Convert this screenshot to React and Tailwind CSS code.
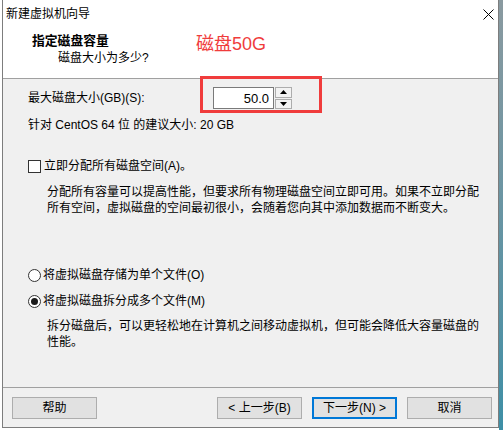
const FONT = { fontFamily: '"Liberation Sans", "Noto Sans CJK SC", sans-serif' }

function CloseIcon() {
  return (
    <svg width="11" height="11" viewBox="0 0 11 11" className="block">
      <path d="M0.5 0.5 L10.5 10.5 M10.5 0.5 L0.5 10.5" stroke="#000" strokeWidth="1" fill="none" />
    </svg>
  )
}

function SpinBox({ value }) {
  return (
    <div className="flex h-[22px] items-stretch">
      <div className="flex w-[61px] items-center justify-end border border-[#7a7a7a] bg-white pr-[4px] text-[13px] leading-none text-black">
        {value}
      </div>
      <div className="ml-[1px] flex w-[17px] flex-col gap-[1px]">
        <button
          type="button"
          className="flex flex-1 items-center justify-center border border-[#adadad] bg-[#f3f3f3]"
        >
          <svg width="7" height="4" viewBox="0 0 7 4">
            <path d="M3.5 0 L7 4 L0 4 Z" fill="#000" />
          </svg>
        </button>
        <button
          type="button"
          className="flex flex-1 items-center justify-center border border-[#adadad] bg-[#f3f3f3]"
        >
          <svg width="7" height="4" viewBox="0 0 7 4">
            <path d="M0 0 L7 0 L3.5 4 Z" fill="#000" />
          </svg>
        </button>
      </div>
    </div>
  )
}

function Radio({ checked, label }) {
  return (
    <div className="flex h-[16px] items-center">
      <span className="flex h-[13px] w-[13px] items-center justify-center rounded-full border border-[#333] bg-white">
        {checked ? <span className="h-[7px] w-[7px] rounded-full bg-[#1a1a1a]" /> : null}
      </span>
      <span className="ml-[2px]">{label}</span>
    </div>
  )
}

function WizardButton({ children, primary, className = '' }) {
  return (
    <button
      type="button"
      className={`flex h-[22px] w-[85px] items-center justify-center bg-[#e1e1e1] text-[12px] leading-none text-black ${
        primary ? 'border-2 border-[#0078d7]' : 'border border-[#adadad]'
      } ${className}`}
    >
      {children}
    </button>
  )
}

export default function App() {
  return (
    <div className="flex h-[430px] w-[503px] bg-white pl-[2px]" style={FONT}>
      <div className="flex h-[428px] w-[497px] flex-col border-x border-b border-[#7d7d7d] bg-[#f0f0f0] text-[12px] leading-[16px] text-black">
        {/* title bar */}
        <div className="flex h-[27px] items-center justify-between bg-white pl-[3px] pr-[4px]">
          <span>新建虚拟机向导</span>
          <span className="mt-[2px]">
            <CloseIcon />
          </span>
        </div>

        {/* header */}
        <div className="relative h-[52px] border-b border-[#a0a0a0] bg-white">
          <div className="pl-[29px] pt-[6px] text-[12.8px] font-bold leading-[16px]">指定磁盘容量</div>
          <div className="pl-[55px] pt-[1px] leading-[16px]">磁盘大小为多少?</div>
          <span className="absolute left-[193px] top-[6px] text-[18px] leading-[22px] text-[#f03c3c]">磁盘50G</span>
        </div>

        {/* body */}
        <div className="relative flex-1 pl-[25px]">
          <div className="mt-[8px] flex h-[22px] items-center">
            <span className="w-[185px]">最大磁盘大小(GB)(S):</span>
            <SpinBox value="50.0" />
          </div>
          <div className="pointer-events-none absolute left-[197px] top-[-3px] h-[37px] w-[122px] border-[3px] border-[#f03c3c]" />

          <div className="mt-[8px] h-[16px]">针对 CentOS 64 位 的建议大小: 20 GB</div>

          <div className="mt-[25px] flex h-[16px] items-center">
            <span className="h-[13px] w-[13px] border border-[#333] bg-white" />
            <span className="ml-[3px]">立即分配所有磁盘空间(A)。</span>
          </div>
          <p className="mt-[10px] pl-[19px] pr-[14px]">
            分配所有容量可以提高性能，但要求所有物理磁盘空间立即可用。如果不立即分配所有空间，虚拟磁盘的空间最初很小，会随着您向其中添加数据而不断变大。
          </p>

          <div className="mt-[51px]">
            <Radio label="将虚拟磁盘存储为单个文件(O)" />
          </div>
          <div className="mt-[10px]">
            <Radio checked label="将虚拟磁盘拆分成多个文件(M)" />
          </div>
          <p className="mt-[9px] pl-[19px] pr-[14px]">
            拆分磁盘后，可以更轻松地在计算机之间移动虚拟机，但可能会降低大容量磁盘的性能。
          </p>
        </div>

        {/* footer */}
        <div className="flex h-[40px] items-start border-t border-[#a0a0a0] pl-[9px] pt-[9px]">
          <WizardButton>帮助</WizardButton>
          <WizardButton className="ml-[120px]">&lt; 上一步(B)</WizardButton>
          <WizardButton primary className="ml-[10px]">
            下一步(N) &gt;
          </WizardButton>
          <WizardButton className="ml-[10px]">取消</WizardButton>
        </div>
      </div>
      <div className="h-full flex-1 bg-gradient-to-b from-[#8a9aa0] to-[#3d8fa6]" />
    </div>
  )
}
